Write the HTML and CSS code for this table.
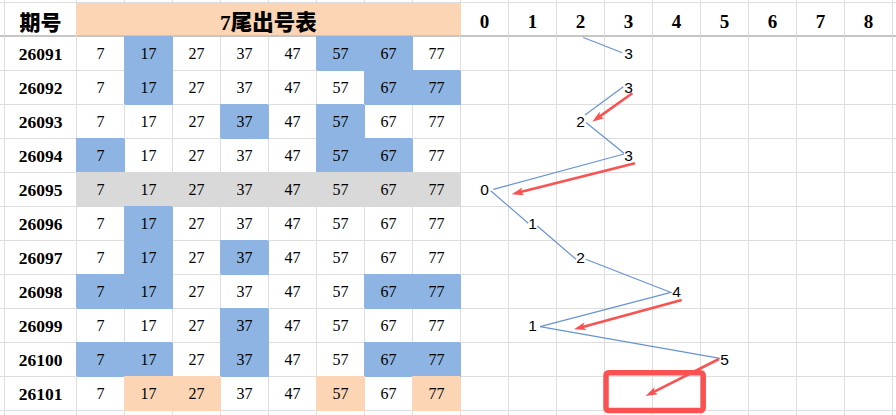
FILE: index.html
```html
<!DOCTYPE html>
<html lang="zh">
<head>
<meta charset="utf-8">
<title>7尾出号表</title>
<link rel="stylesheet" href="styles.css">
</head>
<body>
<div class="sheet">
  <div class="row row-top">
    <div class="c edge"></div><div class="c id"></div>
    <div class="c n"></div><div class="c n"></div><div class="c n"></div><div class="c n"></div><div class="c n"></div><div class="c n"></div><div class="c n"></div><div class="c n"></div>
    <div class="c k"></div><div class="c k"></div><div class="c k"></div><div class="c k"></div><div class="c k"></div><div class="c k"></div><div class="c k"></div><div class="c k"></div><div class="c k"></div><div class="c tail"></div>
  </div>
  <div class="row row-head">
    <div class="c edge"></div><div class="c id head-id">期号</div>
    <div class="c title">7尾出号表</div>
    <div class="c k hk">0</div><div class="c k hk">1</div><div class="c k hk">2</div><div class="c k hk">3</div><div class="c k hk">4</div><div class="c k hk">5</div><div class="c k hk">6</div><div class="c k hk">7</div><div class="c k hk">8</div><div class="c tail"></div>
  </div>
  <div class="row">
    <div class="c edge"></div><div class="c id">26091</div>
    <div class="c n">7</div><div class="c n blue">17</div><div class="c n">27</div><div class="c n">37</div><div class="c n">47</div><div class="c n blue">57</div><div class="c n blue">67</div><div class="c n">77</div>
    <div class="c k"></div><div class="c k"></div><div class="c k"></div><div class="c k">3</div><div class="c k"></div><div class="c k"></div><div class="c k"></div><div class="c k"></div><div class="c k"></div><div class="c tail"></div>
  </div>
  <div class="row">
    <div class="c edge"></div><div class="c id">26092</div>
    <div class="c n">7</div><div class="c n blue">17</div><div class="c n">27</div><div class="c n">37</div><div class="c n">47</div><div class="c n">57</div><div class="c n blue">67</div><div class="c n blue">77</div>
    <div class="c k"></div><div class="c k"></div><div class="c k"></div><div class="c k">3</div><div class="c k"></div><div class="c k"></div><div class="c k"></div><div class="c k"></div><div class="c k"></div><div class="c tail"></div>
  </div>
  <div class="row">
    <div class="c edge"></div><div class="c id">26093</div>
    <div class="c n">7</div><div class="c n">17</div><div class="c n">27</div><div class="c n blue">37</div><div class="c n">47</div><div class="c n blue">57</div><div class="c n">67</div><div class="c n">77</div>
    <div class="c k"></div><div class="c k"></div><div class="c k">2</div><div class="c k"></div><div class="c k"></div><div class="c k"></div><div class="c k"></div><div class="c k"></div><div class="c k"></div><div class="c tail"></div>
  </div>
  <div class="row">
    <div class="c edge"></div><div class="c id">26094</div>
    <div class="c n blue">7</div><div class="c n">17</div><div class="c n">27</div><div class="c n">37</div><div class="c n">47</div><div class="c n blue">57</div><div class="c n blue">67</div><div class="c n">77</div>
    <div class="c k"></div><div class="c k"></div><div class="c k"></div><div class="c k">3</div><div class="c k"></div><div class="c k"></div><div class="c k"></div><div class="c k"></div><div class="c k"></div><div class="c tail"></div>
  </div>
  <div class="row">
    <div class="c edge"></div><div class="c id">26095</div>
    <div class="c n grey">7</div><div class="c n grey">17</div><div class="c n grey">27</div><div class="c n grey">37</div><div class="c n grey">47</div><div class="c n grey">57</div><div class="c n grey">67</div><div class="c n grey">77</div>
    <div class="c k">0</div><div class="c k"></div><div class="c k"></div><div class="c k"></div><div class="c k"></div><div class="c k"></div><div class="c k"></div><div class="c k"></div><div class="c k"></div><div class="c tail"></div>
  </div>
  <div class="row">
    <div class="c edge"></div><div class="c id">26096</div>
    <div class="c n">7</div><div class="c n blue">17</div><div class="c n">27</div><div class="c n">37</div><div class="c n">47</div><div class="c n">57</div><div class="c n">67</div><div class="c n">77</div>
    <div class="c k"></div><div class="c k">1</div><div class="c k"></div><div class="c k"></div><div class="c k"></div><div class="c k"></div><div class="c k"></div><div class="c k"></div><div class="c k"></div><div class="c tail"></div>
  </div>
  <div class="row">
    <div class="c edge"></div><div class="c id">26097</div>
    <div class="c n">7</div><div class="c n blue">17</div><div class="c n">27</div><div class="c n blue">37</div><div class="c n">47</div><div class="c n">57</div><div class="c n">67</div><div class="c n">77</div>
    <div class="c k"></div><div class="c k"></div><div class="c k">2</div><div class="c k"></div><div class="c k"></div><div class="c k"></div><div class="c k"></div><div class="c k"></div><div class="c k"></div><div class="c tail"></div>
  </div>
  <div class="row">
    <div class="c edge"></div><div class="c id">26098</div>
    <div class="c n blue">7</div><div class="c n blue">17</div><div class="c n">27</div><div class="c n">37</div><div class="c n">47</div><div class="c n">57</div><div class="c n blue">67</div><div class="c n blue">77</div>
    <div class="c k"></div><div class="c k"></div><div class="c k"></div><div class="c k"></div><div class="c k">4</div><div class="c k"></div><div class="c k"></div><div class="c k"></div><div class="c k"></div><div class="c tail"></div>
  </div>
  <div class="row">
    <div class="c edge"></div><div class="c id">26099</div>
    <div class="c n">7</div><div class="c n">17</div><div class="c n">27</div><div class="c n blue">37</div><div class="c n">47</div><div class="c n">57</div><div class="c n">67</div><div class="c n">77</div>
    <div class="c k"></div><div class="c k">1</div><div class="c k"></div><div class="c k"></div><div class="c k"></div><div class="c k"></div><div class="c k"></div><div class="c k"></div><div class="c k"></div><div class="c tail"></div>
  </div>
  <div class="row">
    <div class="c edge"></div><div class="c id">26100</div>
    <div class="c n blue">7</div><div class="c n blue">17</div><div class="c n">27</div><div class="c n blue">37</div><div class="c n">47</div><div class="c n">57</div><div class="c n blue">67</div><div class="c n blue">77</div>
    <div class="c k"></div><div class="c k"></div><div class="c k"></div><div class="c k"></div><div class="c k"></div><div class="c k">5</div><div class="c k"></div><div class="c k"></div><div class="c k"></div><div class="c tail"></div>
  </div>
  <div class="row">
    <div class="c edge"></div><div class="c id">26101</div>
    <div class="c n">7</div><div class="c n orange">17</div><div class="c n orange">27</div><div class="c n">37</div><div class="c n">47</div><div class="c n orange">57</div><div class="c n">67</div><div class="c n orange">77</div>
    <div class="c k"></div><div class="c k"></div><div class="c k"></div><div class="c k"></div><div class="c k"></div><div class="c k"></div><div class="c k"></div><div class="c k"></div><div class="c k"></div><div class="c tail"></div>
  </div>
  <div class="row row-bottom">
    <div class="c edge"></div><div class="c id"></div>
    <div class="c n"></div><div class="c n"></div><div class="c n"></div><div class="c n"></div><div class="c n"></div><div class="c n"></div><div class="c n"></div><div class="c n"></div>
    <div class="c k"></div><div class="c k"></div><div class="c k"></div><div class="c k"></div><div class="c k"></div><div class="c k"></div><div class="c k"></div><div class="c k"></div><div class="c k"></div><div class="c tail"></div>
  </div>

  <svg class="overlay" width="896" height="415" viewBox="0 0 896 415">
    <defs>
      <marker id="ah" viewBox="0 0 12 8" refX="4" refY="4" markerWidth="12" markerHeight="8" markerUnits="userSpaceOnUse" orient="auto">
        <path d="M0,0 L12,4 L0,8 L3,4 Z" class="ahead"/>
      </marker>
    </defs>
    <g class="trend">
      <line x1="583.3" y1="37.5" x2="622.3" y2="52.7"/>
      <line x1="623.3" y1="86.7" x2="585" y2="115"/>
      <line x1="586" y1="122.5" x2="624" y2="153.3"/>
      <line x1="624" y1="154" x2="493.3" y2="189.3"/>
      <line x1="490.7" y1="190.7" x2="528.3" y2="223.3"/>
      <line x1="537.3" y1="226" x2="576" y2="259.3"/>
      <line x1="585.7" y1="259.3" x2="671.7" y2="292.7"/>
      <line x1="670" y1="292.7" x2="540" y2="326.7"/>
      <line x1="540" y1="326.7" x2="720" y2="358.3"/>
    </g>
    <g class="arrows">
      <line x1="632.3" y1="93.3" x2="598.8" y2="117.1" marker-end="url(#ah)"/>
      <line x1="635" y1="163.3" x2="519.5" y2="192.3" marker-end="url(#ah)"/>
      <line x1="681.7" y1="300" x2="581.7" y2="327.2" marker-end="url(#ah)"/>
      <line x1="719" y1="359" x2="652.8" y2="392.4" marker-end="url(#ah)"/>
      <rect x="606" y="372.8" width="97.2" height="37.8" rx="2.5" class="box"/>
    </g>
  </svg>
</div>
</body>
</html>
```

FILE: styles.css
```css
html, body {
  margin: 0;
  padding: 0;
  background: #ffffff;
}

body {
  width: 896px;
  height: 415px;
  overflow: hidden;
  font-family: "Liberation Serif", "Noto Sans CJK SC", serif;
  color: #000;
}

.sheet {
  position: relative;
  width: 896px;
  height: 415px;
}

.row {
  display: flex;
  height: 34px;
}

.row-top { height: 3px; }
.row-head { height: 34px; }
.row-bottom { height: 10px; }

.c {
  box-sizing: border-box;
  flex: none;
  border-right: 1px solid #dedede;
  border-bottom: 1px solid #dedede;
  display: flex;
  align-items: center;
  justify-content: center;
  height: 100%;
  background: #fff;
}

.row-head .c {
  border-bottom: 2px solid #c6c6c6;
}

.edge { width: 5px; }
.id {
  width: 72px;
  font-family: "Liberation Serif", serif;
  font-weight: bold;
  font-size: 17.5px;
  padding-top: 1px;
}
.n {
  width: 48px;
  font-family: "Liberation Serif", serif;
  font-size: 16px;
  padding-top: 1px;
}
.k {
  width: 48px;
  font-family: "Liberation Sans", sans-serif;
  font-size: 15.5px;
  padding-top: 1px;
}
.tail {
  flex: 1;
  border-right: none;
}

.head-id {
  font-family: "Noto Sans CJK SC", sans-serif;
  font-size: 21px;
  font-weight: 900;
  padding-top: 3px;
  letter-spacing: 0;
}

.title {
  width: 384px;
  background: #fcd5b4;
  border-right-color: #fcd5b4;
  box-shadow: -1px 0 0 0 #fcd5b4;
  font-family: "Liberation Serif", "Noto Sans CJK SC", serif;
  font-size: 21.5px;
  font-weight: 900;
  padding-top: 3px;
}

.hk {
  font-family: "Liberation Serif", serif;
  font-weight: bold;
  font-size: 19px;
  padding-top: 5px;
}

.blue {
  background: #8db4e2;
  border-color: #8db4e2;
  box-shadow: -1px -1px 0 0 #8db4e2;
}
.grey {
  background: #d9d9d9;
  border-color: #d9d9d9;
  box-shadow: -1px -1px 0 0 #d9d9d9;
}
.orange {
  background: #fcd5b4;
  border-color: #fcd5b4;
  box-shadow: -1px -1px 0 0 #fcd5b4;
}

.overlay {
  position: absolute;
  left: 0;
  top: 0;
  pointer-events: none;
}

.trend line {
  stroke: #6893d3;
  stroke-width: 1.2;
  fill: none;
}

.arrows line {
  stroke: #fa5252;
  stroke-width: 2.6;
  fill: none;
}

.ahead {
  fill: #fa5252;
}

.arrows .box {
  fill: none;
  stroke: #fa5252;
  stroke-width: 5.5;
}
```
